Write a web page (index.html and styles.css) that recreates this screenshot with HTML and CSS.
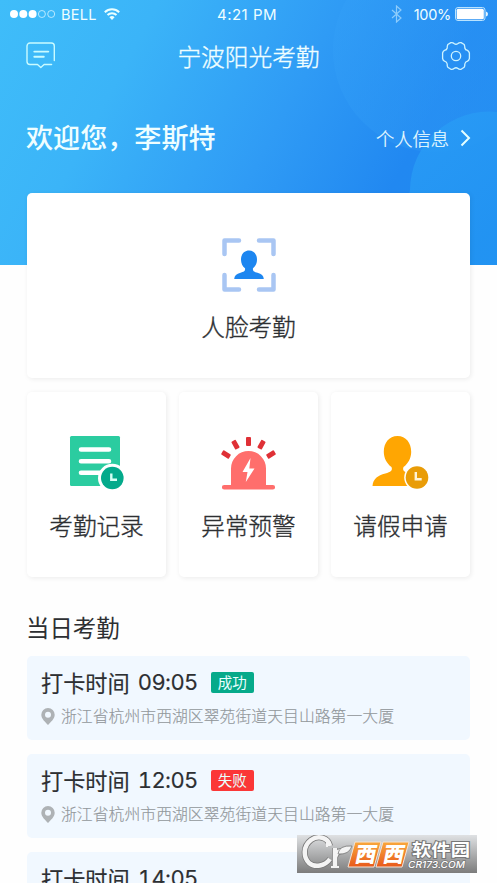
FILE: index.html
```html
<!DOCTYPE html>
<html lang="zh-CN">
<head>
<meta charset="utf-8">
<title>宁波阳光考勤</title>
<link rel="stylesheet" href="styles.css">
</head>
<body>
<div class="screen">
  <header class="hero">
    <svg class="hero-bg" width="497" height="265" viewBox="0 0 497 265">
      <defs>
        <linearGradient id="c1" x1="0" y1="0" x2="1" y2="0.6"><stop offset="0" stop-color="#36a3f8" stop-opacity=".35"/><stop offset="1" stop-color="#2a93f3" stop-opacity=".5"/></linearGradient>
        <linearGradient id="c2" x1="0" y1="0" x2="0.5" y2="1"><stop offset="0" stop-color="#2a9df6" stop-opacity=".85"/><stop offset="1" stop-color="#2294f2" stop-opacity=".9"/></linearGradient>
      </defs>
      <circle cx="435" cy="50" r="102" fill="url(#c1)"/>
      <path d="M410 190a79 79 0 0 1 87-78V265H430A79 79 0 0 1 410 190Z" fill="url(#c2)"/>
    </svg>
    <div class="status">
      <div class="status-left">
        <svg width="46" height="10" viewBox="0 0 46 10"><g fill="#fff"><circle cx="4" cy="5" r="4"/><circle cx="13.3" cy="5" r="4"/><circle cx="22.6" cy="5" r="4"/></g><g fill="none" stroke="#d5f4ff" stroke-width=".8"><circle cx="31.9" cy="5" r="3.5"/><circle cx="41.2" cy="5" r="3.5"/></g></svg>
        <span class="carrier">BELL</span>
        <svg width="16" height="12" viewBox="0 0 16 12"><g fill="none" stroke="#eaffff" stroke-width="2"><path d="M.8 4.2a10.2 10.2 0 0 1 14.4 0"/><path d="M3.5 7a6.4 6.4 0 0 1 9 0"/></g><path d="M5.4 9.2a3.7 3.7 0 0 1 5.2 0L8 11.9Z" fill="#eaffff"/></svg>
      </div>
      <div class="clock">4:21 PM</div>
      <div class="status-right">
        <svg width="11" height="18" viewBox="0 0 11 18"><path d="M1 5l9 8-4.5 4V1L10 5 1 13" fill="none" stroke="#8dccfb" stroke-width="1.2"/></svg>
        <span class="percent">100%</span>
        <svg width="33" height="14" viewBox="0 0 33 14"><rect x=".5" y=".5" width="29.5" height="13" rx="2.5" fill="none" stroke="#b9e3ff"/><rect x="1.7" y="1.7" width="27.1" height="10.6" rx="1.5" fill="#fff"/><path d="M31 4.5q2 .5 2 2.5t-2 2.5Z" fill="#e4f5ff"/></svg>
      </div>
    </div>
    <nav class="navbar">
      <svg width="30" height="28" viewBox="0 0 30 28"><g fill="none" stroke="#c9fbff" stroke-width="1.4" stroke-linecap="round" stroke-linejoin="round"><path d="M28.3 18.5V4a3 3 0 0 0-3-3H4a3 3 0 0 0-3 3v15.500a3 3 0 0 0 3 3h7.500l3.300 3 3.300-3h7.500"/><path d="M8.300 9.600h14M8.300 14.800h9.500" stroke-width="1.9"/></g></svg>
      <h1>宁波阳光考勤</h1>
      <svg width="30" height="30" viewBox="0 0 30 30"><g fill="none" stroke="#cdf3ff" stroke-width="1.3" stroke-linejoin="round"><path d="M9.900 1.600Q12 1.300 13 2.500Q15 4 17 2.500Q18 1.300 20.100 1.600L23.200 3.500Q24 5.500 23.800 7Q24.200 8.900 26.500 9.400Q27.900 10.200 28.400 12V17.500Q27.900 19.500 26.500 20.200Q24.200 20.900 23.800 23Q24 24.800 23.200 26.300L20.100 28.300Q18 28.600 17 27.500Q15 26 13 27.500Q12 28.600 9.900 28.300L6.800 26.300Q6 24.800 6.200 23Q5.800 20.900 3.500 20.200Q2 19.500 1.600 17.500V12Q2 10.200 3.500 9.400Q5.800 8.900 6.200 7Q6 5.500 6.800 3.500Z"/><circle cx="15" cy="15" r="4.700"/></g></svg>
    </nav>
    <div class="welcome">
      <span class="hello">欢迎您，李斯特</span>
      <a class="profile">个人信息<svg width="11" height="18" viewBox="0 0 11 18"><path d="M1.500 1.500L9 9l-7.500 7.500" fill="none" stroke="#e4ffff" stroke-width="2"/></svg></a>
    </div>
  </header>

  <main>
    <section class="card face">
      <svg width="54" height="54" viewBox="0 0 54 54"><path d="M17 2.500H2.500V16M37 2.500h14.500V16M2.500 37v14.500H17M51.500 37v14.500H37" fill="none" stroke="#a9c6f3" stroke-width="4.500" stroke-linecap="round" stroke-linejoin="round"/><path d="M27 12.500c5 0 8 4 8 9.200 0 3.500-1.600 6.700-4 8.500-.6 2.800 1 3.600 4.500 4.500 4 1 6.100 3 6.300 6.300H12.200c.2-3.300 2.300-5.300 6.300-6.300 3.500-.9 5.100-1.700 4.500-4.500-2.400-1.800-4-5-4-8.500 0-5.200 3-9.200 8-9.200Z" fill="#1d86f0"/></svg>
      <span>人脸考勤</span>
    </section>
    <section class="tiles">
      <div class="card tile">
        <svg width="56" height="56" viewBox="0 0 56 56"><rect x="1" y="0" width="50" height="50" rx="1.500" fill="#2bcca0"/><path d="M12 13.500h28M12 25.200h28M12 36.800h21" stroke="#fff" stroke-width="4.600" stroke-linecap="round"/><circle cx="43.300" cy="42" r="14.300" fill="#fff"/><circle cx="43.300" cy="42" r="11.300" fill="#04aa8b"/><path d="M42.300 37.500v6.200h5.700" fill="none" stroke="#d5fff4" stroke-width="2.400"/></svg>
        <span>考勤记录</span>
      </div>
      <div class="card tile">
        <svg class="siren" width="56" height="56" viewBox="0 0 56 56"><path d="M11 49V32.500a17.500 17.500 0 0 1 35 0V49h6.800a2.300 2.300 0 0 1 0 4.600H4.200a2.300 2.300 0 0 1 0-4.600Z" fill="#ff6e6c"/><path d="M30.500 22L22.500 36h5l-1.700 10L34.500 32.500h-5.200Z" fill="#fff"/><g fill="#df3036"><rect x="26" y="1" width="5" height="9" rx="1"/><rect x="13" y="4.200" width="5" height="9" rx="1" transform="rotate(-29 15.500 8.700)"/><rect x="39" y="4.200" width="5" height="9" rx="1" transform="rotate(29 41.500 8.700)"/><rect x="3.500" y="14" width="5" height="9" rx="1" transform="rotate(-58 6 18.500)"/><rect x="48.500" y="14" width="5" height="9" rx="1" transform="rotate(58 51 18.500)"/></g></svg>
        <span>异常预警</span>
      </div>
      <div class="card tile">
        <svg class="leave" width="56" height="56" viewBox="0 0 56 56"><path d="M26.500 0c8.500 0 13.700 7 13.700 15.800 0 6.200-3 12-7.700 15.200-1.300 3.700.6 5 6.200 6.500C46 39.400 51 43 51 50H1.500c.6-7 5.200-10.600 12.800-12.500 5.600-1.500 7.500-2.800 6.200-6.500-4.700-3.200-7.700-9-7.700-15.200C12.800 7 18 0 26.500 0Z" fill="#ffa602"/><circle cx="46" cy="41.500" r="12.800" fill="#fff"/><circle cx="46" cy="41.500" r="11.300" fill="#e99c07"/><path d="M44.800 36v7.200h5.900" fill="none" stroke="#fff4d7" stroke-width="2.400"/></svg>
        <span>请假申请</span>
      </div>
    </section>

    <h2>当日考勤</h2>
    <section class="records">
      <article class="record">
        <div class="time"><span>打卡时间</span><b>09:05</b><span class="badge ok">成功</span></div>
        <div class="place"><svg width="14" height="17" viewBox="0 0 14 17"><path fill-rule="evenodd" d="M7 0a6.700 6.700 0 0 1 6.700 6.700C13.700 11 9.500 14 7 17 4.500 14 .3 11 .3 6.700A6.700 6.700 0 0 1 7 0Zm0 3.700a3 3 0 1 0 0 6 3 3 0 0 0 0-6Z" fill="#aeb2b5"/></svg>浙江省杭州市西湖区翠苑街道天目山路第一大厦</div>
      </article>
      <article class="record">
        <div class="time"><span>打卡时间</span><b>12:05</b><span class="badge fail">失败</span></div>
        <div class="place"><svg width="14" height="17" viewBox="0 0 14 17"><path fill-rule="evenodd" d="M7 0a6.700 6.700 0 0 1 6.700 6.700C13.700 11 9.500 14 7 17 4.500 14 .3 11 .3 6.700A6.700 6.700 0 0 1 7 0Zm0 3.700a3 3 0 1 0 0 6 3 3 0 0 0 0-6Z" fill="#aeb2b5"/></svg>浙江省杭州市西湖区翠苑街道天目山路第一大厦</div>
      </article>
      <article class="record">
        <div class="time"><span>打卡时间</span><b>14:05</b></div>
      </article>
    </section>
  </main>

  <div class="watermark">
    <svg width="180" height="38" viewBox="0 0 180 38">
      <defs>
        <linearGradient id="orange" x1="0" y1="0" x2="0" y2="1"><stop offset="0" stop-color="#f9a83c"/><stop offset="1" stop-color="#e8591b"/></linearGradient>
      </defs>
      <g fill="none">
        <path d="M33 11C31 2 21 0 14 5 6 11 6 22 12 28c6 5 16 3 21-4" stroke="#777" stroke-width="6"/>
        <path d="M38 13v19M38 22q2-6 7-6" stroke="#777" stroke-width="6"/>
        <path d="M33 11C31 2 21 0 14 5 6 11 6 22 12 28c6 5 16 3 21-4" stroke="#f4f4f4" stroke-width="4.500"/>
        <path d="M38 13v19M38 22q2-6 7-6" stroke="#f4f4f4" stroke-width="4.500"/>
        <path d="M30 3v9M34 32h8" stroke="#f4f4f4" stroke-width="2"/>
      </g>
      <path d="M41 19q1-9 14-8-3 9-14 8Z" fill="#f4f4f4" stroke="#777" stroke-width=".8"/>
      <path d="M58 7h26l-7 25H51ZM86 7h26l-7 25H79Z" fill="url(#orange)" stroke="#f3e4d8"/>
      <g class="xixi"><text transform="translate(57 26.500) skewX(-12)">西</text><text transform="translate(85 26.500) skewX(-12)">西</text></g>
      <text class="soft" x="115" y="20.5" textLength="58" lengthAdjust="spacingAndGlyphs">软件园</text>
      <text class="domain" x="111" y="32.5" textLength="57" lengthAdjust="spacingAndGlyphs">CR173.COM</text>
    </svg>
  </div>
</div>
</body>
</html>
```
FILE: styles.css
```css
* { box-sizing: border-box; }
body { margin: 0; background: #fff; color: #2d2f32; font-family: Inter, "Noto Sans CJK SC", sans-serif; }
svg { display: block; flex: none; }
.screen { position: relative; width: 497px; height: 883px; overflow: hidden; background: #fefefe; }
.hero { position: relative; height: 265px; color: #effeff; background: linear-gradient(118deg, #3fbdf9 0%, #3bb4f8 25%, #2f9bf5 54%, #2188f1 77%, #1f8bf1 100%); }
.hero-bg { position: absolute; inset: 0; }
.status { position: relative; height: 28px; padding: 0 9px 0 10px; display: grid; grid-template-columns: 1fr auto 1fr; align-items: center; font-size: 14.5px; }
.status-left, .status-right { display: flex; align-items: center; }
.carrier { margin: 0 7px 0 5px; letter-spacing: .3px; }
.status-right { justify-content: flex-end; }
.percent { margin: 0 4px 0 12px; letter-spacing: -.3px; }
.clock { font-size: 15px; letter-spacing: .5px; padding-right: 4px; }
.navbar { position: relative; height: 56px; padding: 0 26px; display: flex; align-items: center; justify-content: space-between; }
h1 { margin: 0; font-size: 23.7px; line-height: 32px; padding-bottom: 1px; font-weight: 300; -webkit-text-stroke: .35px currentColor; font-family: "Noto Sans CJK SC", sans-serif; }
.welcome { position: relative; margin-top: 29px; padding: 0 26px; height: 48px; display: flex; align-items: center; justify-content: space-between; font-family: "Noto Sans CJK SC", sans-serif; }
.hello { font-size: 27.1px; font-weight: 500; padding-bottom: 1px; }
.profile { display: flex; align-items: center; gap: 11px; font-size: 18.3px; font-weight: 300; -webkit-text-stroke: .2px currentColor; padding-top: 2px; }
main { position: relative; margin-top: -72px; padding: 0 27px; }
.card { background: #fff; border-radius: 5px; box-shadow: 1px 1px 5px rgba(0, 0, 0, .08); display: flex; flex-direction: column; align-items: center; font: 300 23.6px/34px "Noto Sans CJK SC", sans-serif; -webkit-text-stroke: .35px currentColor; }
.face { height: 185px; padding-top: 45px; gap: 17px; }
.tiles { display: grid; grid-template-columns: repeat(3, 139px); justify-content: space-between; margin-top: 14px; }
.tile { height: 185px; padding-top: 44px; gap: 16px; }
.siren { margin-left: -1px; }
.leave { overflow: visible; margin-left: -3px; }
h2 { margin: 32px 0 0 -1px; font: 400 23.4px/36px "Noto Sans CJK SC", sans-serif; }
.records { display: grid; gap: 14px; margin-top: 11px; }
.record { height: 84px; padding: 9px 14px; border-radius: 5px; background: #f1f8ff; }
.time { height: 34px; display: flex; align-items: center; font: 400 22.2px/33px "Noto Sans CJK SC", sans-serif; -webkit-text-stroke: .15px currentColor; }
.time b { width: 73px; margin-left: 8px; font: 400 22px/33px Inter, sans-serif; font-feature-settings: "tnum"; letter-spacing: -.6px; }
.badge { width: 43px; height: 21px; border-radius: 2px; color: #eaffff; font-size: 14.5px; line-height: 20px; text-align: center; -webkit-text-stroke: 0; }
.ok { background: #06aa8a; }
.fail { background: #fb3737; }
.place { margin-top: 4px; height: 26px; display: flex; align-items: center; gap: 6px; color: #92979b; font: 300 15.87px/26px "Noto Sans CJK SC", sans-serif; -webkit-text-stroke: .15px currentColor; }
.watermark { position: absolute; left: 297px; top: 835px; width: 180px; height: 38px; background: linear-gradient(#dfe1e3, #7c7c7c); }
.xixi { fill: #fff; font: 900 21px "Noto Sans CJK SC", sans-serif; }
.soft { fill: #fff; stroke: #777; stroke-width: 2px; paint-order: stroke; font: 700 17px "Noto Sans CJK SC", sans-serif; }
.domain { fill: #fff; stroke: #777; stroke-width: 1.5px; paint-order: stroke; font: italic 500 9.5px Inter, sans-serif; }
```
